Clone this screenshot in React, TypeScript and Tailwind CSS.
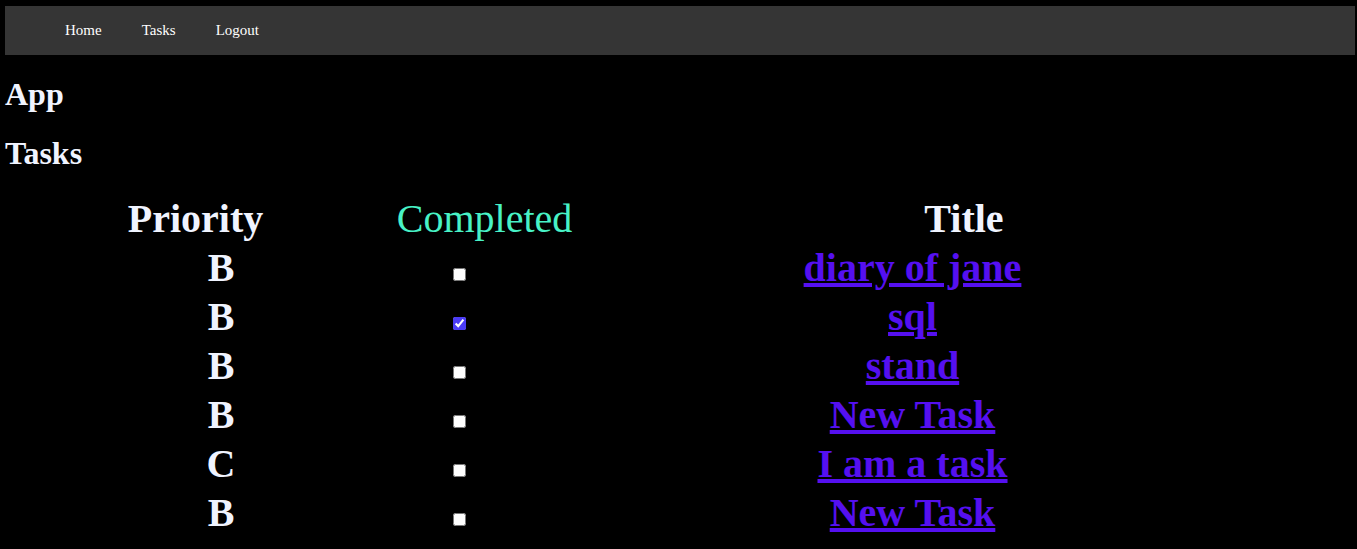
import React from "react";

const rows = [
  { p: "B", done: false, title: "diary of jane" },
  { p: "B", done: true, title: "sql" },
  { p: "B", done: false, title: "stand" },
  { p: "B", done: false, title: "New Task" },
  { p: "C", done: false, title: "I am a task" },
  { p: "B", done: false, title: "New Task" },
];

export default function App() {
  return (
    <div
      className="min-h-[549px] bg-black px-[5px] pt-[6px] text-[#f0f4ff]"
      style={{ fontFamily: '"Liberation Serif", "Times New Roman", serif' }}
    >
      <nav className="flex h-[49px] w-[1350px] items-center bg-[#353535] pl-[60px] text-[15px] text-white">
        <a className="mr-[40px]" href="#">Home</a>
        <a className="mr-[40px]" href="#">Tasks</a>
        <a href="#">Logout</a>
      </nav>
      <h1 className="mt-[21px] text-[32px] font-bold leading-[36px]">App</h1>
      <h1 className="mt-[23px] mb-[24px] text-[32px] font-bold leading-[36px]">Tasks</h1>
      <div className="text-[40px]">
        <div className="flex h-[48px] items-center leading-[48px]">
          <div className="w-[381px] text-center font-bold">Priority</div>
          <div className="w-[197px] text-center text-[#48f2c6]">Completed</div>
          <div className="w-[762px] text-center font-bold">Title</div>
        </div>
        {rows.map((r, i) => (
          <div key={i} className="flex h-[49px] leading-[49px]">
            <div className="w-[432px] text-center font-bold">{r.p}</div>
            <div className="flex w-[44px] justify-center pt-[25px]">
              <input
                type="checkbox"
                defaultChecked={r.done}
                className="m-0 h-[13px] w-[13px] accent-[#4b3cf5]"
              />
            </div>
            <div className="w-[863px] text-center font-bold">
              <a href="#" className="text-[#5510f0] underline">
                {r.title}
              </a>
            </div>
          </div>
        ))}
      </div>
    </div>
  );
}
